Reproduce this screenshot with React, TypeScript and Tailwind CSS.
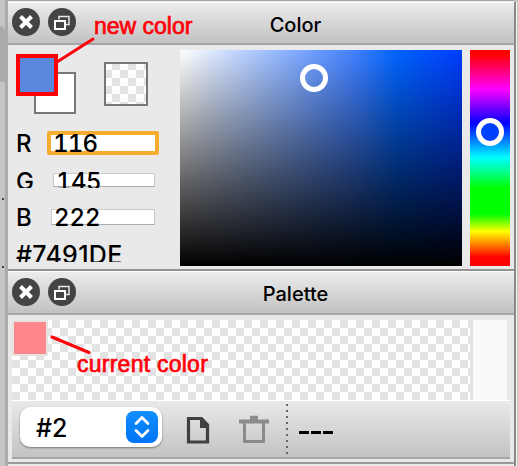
import React from "react";

function RoundButton({ kind }: { kind: "close" | "float" }) {
  return (
    <svg width="28" height="28" viewBox="0 0 28 28" className="block">
      <circle cx="14" cy="14" r="14" fill="#444444" />
      {kind === "close" ? (
        <path d="M8.5 8.5L19.5 19.5M19.5 8.5L8.5 19.5" stroke="#fff" strokeWidth="4" />
      ) : (
        <>
          <path d="M11 11.5V8.5H21V16.5H18" fill="none" stroke="#e8e8e8" strokeWidth="1.5" />
          <rect x="7" y="13" width="10" height="8" fill="#444" stroke="#fff" strokeWidth="2" />
        </>
      )}
    </svg>
  );
}

function TitleBar({ title, className }: { title: string; className: string }) {
  return (
    <div className={"flex items-start border-t border-b-2 border-t-white border-b-[#a6a6a6] bg-linear-to-b from-[#ececec] to-[#c2c2c2] pl-1 " + className}>
      <div className="flex w-[72px] gap-2 pt-[5px]">
        <RoundButton kind="close" />
        <RoundButton kind="float" />
      </div>
      <div className="w-[423px] pt-2 text-center text-[20px] leading-[28px]">{title}</div>
    </div>
  );
}

function Ring({ className }: { className: string }) {
  return <div className={"absolute size-[28px] rounded-full border-5 border-white " + className} />;
}

function Channel({ label, value, row, field }: { label: string; value: string; row: string; field: string }) {
  return (
    <div className={"flex overflow-hidden text-[24px] tabular-nums " + row}>
      <span className="w-[36px] shrink-0">{label}</span>
      <div className={"shrink-0 whitespace-nowrap " + field}>{value}</div>
    </div>
  );
}

const checks = "bg-[conic-gradient(#e3e3e3_25%,#fff_0_50%,#e3e3e3_0_75%,#fff_0)] bg-[length:16px_16px]";

export default function App() {
  return (
    <div className="relative flex h-[466px] w-[518px] overflow-hidden bg-[#c4c4c4] font-['Inter',sans-serif] font-medium text-black">
      <div className="flex w-[8px] shrink-0 flex-col border-r-3 border-[#ababab] pt-[26px]">
        <div className="h-[56px] rounded-tr-md bg-[#aaaaaa]" />
        <div className="mt-[116px] ml-[2px] size-[2px] bg-[#444]" />
        <div className="mt-[66px] ml-[2px] size-[2px] bg-[#444]" />
      </div>
      <div className="flex w-[506px] shrink-0 flex-col border-t border-[#a5a5a5] bg-[#e9e9e9]">
        <TitleBar title="Color" className="mt-px h-[43px]" />
        <div className="flex h-[224px] pt-[5px]">
          <div className="w-[172px] shrink-0 pl-2">
            <div className="flex h-[84px]">
              <div className="relative w-[88px]">
                <div className="absolute top-[22px] left-[18px] size-[42px] border-2 border-[#777] bg-white" />
                <div className="absolute top-[4px] left-0 size-[42px] border-4 border-[#ff0000] bg-[#5b88dc]" />
              </div>
              <div className={"mt-3 size-[44px] border-2 border-[#777] bg-origin-border " + checks} />
            </div>
            <Channel label="R" value="116" row="-mt-[3px] h-[25px] pt-[3px] leading-[20px]" field="-mt-[3px] -ml-[5px] h-[24px] w-[112px] rounded-[2px] border-4 border-[#f6ac2f] bg-white pl-[2px] leading-[18px] tracking-[-0.8px]" />
            <Channel label="G" value="145" row="mt-[16px] h-[16px] leading-[20px]" field="mt-px ml-[1px] h-[14px] w-[102px] border border-b-[#aaa] border-[#ccc] bg-white pl-[2px] leading-[16px] tracking-[-0.5px]" />
            <Channel label="B" value="222" row="mt-[20px] h-[18px] leading-[20px]" field="mt-px -ml-px h-[16px] w-[104px] border border-b-[#aaa] border-[#ccc] bg-white pl-[2px] leading-[16px]" />
            <div className="mt-[19px] h-[17px] overflow-hidden text-[25px] leading-[20px] tracking-[0.3px]">#7491DE</div>
          </div>
          <div className="relative h-[216px] w-[282px] bg-[linear-gradient(to_bottom,transparent,#000),linear-gradient(to_right,#fff,#4482ff_61%,#0064ff_77%,#003cff)]">
            <Ring className="top-[14px] left-[120px]" />
          </div>
          <div className="relative ml-2 h-[216px] w-[40px] bg-[linear-gradient(to_bottom,#f00_2%,#f0f_18%,#00f_34%,#0040ff_38%,#0ff_50%,#0f0_64%,#0f0_76%,#ff0_84%,#f00_96%)]">
            <Ring className="top-[68px] left-[6px] bg-[#0040ff]" />
          </div>
        </div>
        <div className="h-[2px] shrink-0 bg-[#929292]" />
        <TitleBar title="Palette" className="h-[44px] [&_svg]:mt-px [&_svg]:-mb-px" />
        <div className="flex h-[85px] pt-[5px] pl-1">
          <div className={"h-[80px] w-[458px] " + checks}>
            <div className="h-[36px] w-[36px] border-2 border-[#e3e3e3] bg-[#ff868a]" />
          </div>
          <div className="w-[3px] bg-[#e3e3e3]" />
          <div className="w-[34px] bg-[#f9f9f9]" />
        </div>
        <div className="ml-1 flex h-[59px] w-[498px] border-t border-b-2 border-t-white border-b-[#a6a6a6] bg-linear-to-b from-[#e9e9e9] to-[#c3c3c3]">
          <div className="mt-[6px] ml-2 flex h-[40px] w-[142px] items-center justify-between rounded-[10px] bg-white pr-1 pl-4 text-[25px] shadow-[0_1px_2px_#777]">
            <span className="pt-[3px]">#2</span>
            <div className="flex size-8 items-center justify-center rounded-[8px] bg-linear-to-b from-[#138fff] to-[#0074f5]">
              <svg width="16" height="24" viewBox="0 0 16 24" fill="none" stroke="#fff" strokeWidth="2.7" strokeLinecap="round" strokeLinejoin="round">
                <path d="M2 8.5L8 2.5L14 8.5M2 15.5L8 21.5L14 15.5" />
              </svg>
            </div>
          </div>
          <svg width="24" height="30" viewBox="0 0 24 30" className="mt-[14px] ml-[24px]">
            <path d="M2.5 3.5H15.5L21.5 10V27H2.5Z" fill="none" stroke="#404040" strokeWidth="3.2" />
            <path d="M14 3V13H23V10L16 3Z" fill="#404040" />
          </svg>
          <svg width="30" height="32" viewBox="0 0 30 32" className="mt-[12px] ml-[29px]" fill="none" stroke="#8b8b8b">
            <path d="M0 8.5H30" strokeWidth="4" />
            <path d="M11 5H19" strokeWidth="4.5" />
            <path d="M5.5 8V28.5H24.5V8" strokeWidth="3" />
          </svg>
          <div className="mt-[3px] ml-[17px] h-[50px] w-[2px] bg-[repeating-linear-gradient(to_bottom,#666_0_2px,transparent_2px_6px)]" />
          <svg width="34" height="3" viewBox="0 0 34 3" className="mt-[30px] ml-[11px]">
            <path d="M0 1.5H10M12 1.5H22M24 1.5H34" stroke="#000" strokeWidth="2.8" />
          </svg>
        </div>
        <div className="mt-[3px] h-[2px] shrink-0 bg-[#999]" />
      </div>
      <div className="mt-[2px] w-[2px] bg-[#898989]" />
      <div className="mt-[2px] w-px bg-[#f5f5f5]" />
      <svg className="absolute inset-0" width="518" height="466" stroke="#ff0008" strokeWidth="3" strokeLinecap="round">
        <path d="M57 62L93 39M52 337L89 352.5" />
      </svg>
      <div className="absolute top-[12px] left-[94px] font-['Liberation_Sans',sans-serif] text-[23px] leading-[28px] font-normal whitespace-nowrap text-[#ff0008] [-webkit-text-stroke:0.7px_#ff0008]">new color</div>
      <div className="absolute top-[350px] left-[77px] font-['Liberation_Sans',sans-serif] text-[23px] leading-[28px] font-normal tracking-[0.25px] whitespace-nowrap text-[#ff0008] [-webkit-text-stroke:0.7px_#ff0008]">current color</div>
    </div>
  );
}
